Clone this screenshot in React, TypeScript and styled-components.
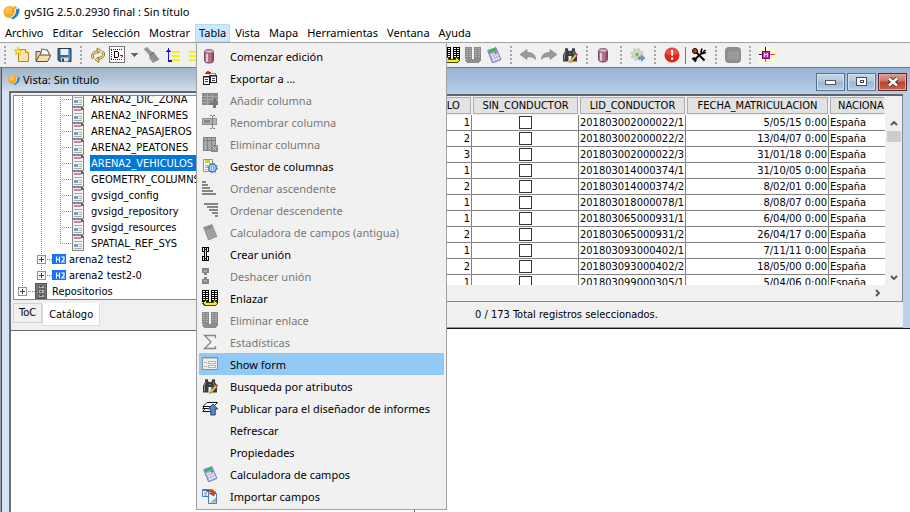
import React from "react";
import styled, { createGlobalStyle } from "styled-components";

const UI = `"Noto Sans", "Open Sans", sans-serif`;
const SWING = `"DejaVu Sans Condensed", "DejaVu Sans", sans-serif`;

const GlobalStyle = createGlobalStyle`
  * { box-sizing: border-box; }
  html, body { margin: 0; background: #fff; overflow: hidden; }
  body { font: 11px/16px ${UI}; color: #000; }
  button { font: inherit; color: inherit; background: none; border: 0; padding: 0; margin: 0; }
  svg { display: block; }
`;

const Page = styled.div`
  display: flex;
  flex-direction: column;
  min-height: 100vh;
`;

const TitleBar = styled.header`
  display: flex;
  align-items: center;
  gap: 4px;
  height: 24px;
  padding-left: 3px;
`;

const AppTitle = styled.h1`
  margin: 0;
  font: 11px/16px ${UI};
`;

const MenuBar = styled.nav`
  position: relative;
  display: flex;
  gap: 1px;
  height: 19px;
  padding-left: 1px;
  border-bottom: 1px solid #a0a0a0;
`;

const MenuButton = styled.button<{ $open?: boolean }>`
  height: 18px;
  padding: 0 4px;
  line-height: 18px;
  background: ${(p) => (p.$open ? "#cce8ff" : "transparent")};
  box-shadow: ${(p) => (p.$open ? "inset 0 0 0 1px #b4dcfa" : "none")};
`;

const Dropdown = styled.ul`
  position: absolute;
  z-index: 10;
  left: 196px;
  top: 18px;
  width: 251px;
  margin: 0;
  padding: 2px;
  list-style: none;
  background: #f1f1f1;
  border: 1px solid #a0a0a0;
`;

const DropItem = styled.button<{ $active?: boolean }>`
  display: flex;
  align-items: center;
  gap: 12px;
  width: 100%;
  height: 22px;
  padding-left: 3px;
  text-align: left;
  line-height: 18px;
  background: ${(p) => (p.$active ? "#91c9f7" : "transparent")};
  &:disabled { color: #777; }
`;

const DropLabel = styled.span`
  padding-top: 2px;
`;

const IconBox = styled.span`
  width: 16px;
  height: 16px;
  flex: none;
`;

const Toolbar = styled.div`
  display: flex;
  align-items: center;
  gap: 7px;
  height: 25px;
  padding-left: 3px;
  background: #f0f0f0;
  border-bottom: 1px solid #77777d;
`;

const Grip = styled.span`
  flex: none;
  width: 4px;
  height: 20px;
  background: radial-gradient(circle at 2px 2px, #a8a8a8 1px, transparent 1px) 0 0 / 4px 4px;
`;

const ToolGroup = styled.div<{ $gapBefore?: number }>`
  display: flex;
  align-items: center;
  gap: 5px;
  margin-left: ${(p) => p.$gapBefore ?? 0}px;
`;

const ToolButton = styled.button<{ $wide?: boolean }>`
  flex: none;
  width: ${(p) => (p.$wide ? 30 : 16)}px;
  margin-left: ${(p) => (p.$wide ? -2 : 0)}px;
`;

const ToolRule = styled.span`
  width: 1px;
  height: 17px;
  background: #777;
`;

const Desktop = styled.main`
  display: flex;
  flex: 1;
  align-items: stretch;
`;

const ViewWindow = styled.section`
  display: flex;
  flex-direction: column;
  flex: none;
  width: 415px;
  border-left: 1px solid #9aa3ad;
  border-right: 1px solid #555;
`;

const ViewTitle = styled.div`
  display: flex;
  align-items: center;
  gap: 3px;
  height: 23px;
  padding-left: 6px;
  border-left: 1px solid #4c5158;
  background: linear-gradient(#9fb4ca, #b4c6d8 50%, #d2dfec);
`;

const WindowCaption = styled.h2`
  margin: 0;
  font: 11px/16px ${UI};
`;

const ViewBody = styled.div`
  display: flex;
  flex: 1;
  flex-direction: column;
  padding-left: 7px;
  background: #d6e4f2;
  border-left: 1px solid #4c5158;
`;

const ViewSplit = styled.div`
  display: flex;
  flex: 1;
  flex-direction: column;
  background: #f0f0f0;
  border-top: 2px solid #63666b;
  border-left: 2px solid #696c70;
`;

const Tree = styled.ul`
  display: flex;
  flex-direction: column;
  justify-content: flex-end;
  height: 205px;
  margin: 2px 2px 0;
  padding: 0 0 0 8px;
  overflow: hidden;
  list-style: none;
  background: #fff;
  border: 1px solid #828790;
  font: 11px/18px ${SWING};
`;

const TreeRow = styled.li`
  display: flex;
  flex: none;
  align-items: center;
  height: 16px;
  white-space: nowrap;
`;

type Line = "full" | "half" | "none";
const Guide = styled.span<{ $v: Line; $h?: boolean; $w: number }>`
  display: flex;
  flex: none;
  align-items: center;
  width: ${(p) => p.$w}px;
  height: 16px;
  background-image: repeating-linear-gradient(#888 0 1px, transparent 1px 2px),
    repeating-linear-gradient(90deg, #888 0 1px, transparent 1px 2px);
  background-repeat: no-repeat;
  background-size: 1px ${(p) => ({ full: 16, half: 8, none: 0 })[p.$v]}px, ${(p) => (p.$h ? "100%" : "0")} 1px;
  background-position: 0 0, 0 8px;
`;

const Expander = styled.button`
  flex: none;
  width: 9px;
  height: 9px;
  margin-left: -4px;
`;

const TreeIcon = styled.span<{ $w: number }>`
  flex: none;
  width: ${(p) => p.$w}px;
`;

const TreeLabel = styled.span<{ $selected?: boolean }>`
  flex: 1;
  padding-left: 1px;
  height: 16px;
  color: ${(p) => (p.$selected ? "#fff" : "#000")};
  background: ${(p) => (p.$selected ? "#0078d7" : "transparent")};
`;

const Tabs = styled.div`
  display: flex;
  align-items: flex-start;
  height: 31px;
  padding: 3px 0 0 2px;
  border-bottom: 1px solid #696969;
`;

const Tab = styled.button<{ $active?: boolean }>`
  height: ${(p) => (p.$active ? 23 : 20)}px;
  padding: 0 ${(p) => (p.$active ? 6 : 5)}px;
  font: 11px/16px ${SWING};
  background: ${(p) => (p.$active ? "#fff" : "#f0f0f0")};
  border: 1px solid ${(p) => (p.$active ? "#dcdcdc" : "#d2d2d2")};
  border-top-color: ${(p) => (p.$active ? "#fff" : "#d2d2d2")};
`;

const MapCanvas = styled.div`
  flex: 1;
  background: #fff;
`;

const TableWindow = styled.section`
  z-index: 1;
  flex: 1;
  align-self: flex-start;
  min-width: 0;
  margin-left: -47px;
  background: #b9d1ea;
  border-bottom: 1px solid #101418;
`;

const TableTitle = styled.div`
  display: flex;
  align-items: center;
  justify-content: flex-end;
  gap: 2px;
  height: 26px;
  padding: 1px 3px 0 0;
  background: linear-gradient(#98b4d3, #a9c4e1 60%, #b9d1ea);
`;

const WinButton = styled.button<{ $close?: boolean }>`
  display: flex;
  align-items: center;
  justify-content: center;
  width: 29px;
  height: 18px;
  border: 1px solid ${(p) => (p.$close ? "#5c2a2a" : "#5b6f86")};
  box-shadow: inset 0 0 0 1px ${(p) => (p.$close ? "#dca79d" : "#d3e2f1")};
  background: ${(p) =>
    p.$close
      ? "linear-gradient(#dd9a8c, #cf7463 45%, #b8432e 50%, #c9644c)"
      : "linear-gradient(#c3d5e8, #b3c9e0 45%, #9bb6d2 50%, #b5cce4)"};
`;

const TableBody = styled.div`
  margin: 0 7px 0 8px;
  background: #f0f0f0;
  border-top: 2px solid #62646b;
`;

const ScrollPane = styled.div`
  display: grid;
  grid-template-columns: minmax(0, 1fr) 17px;
  border-right: 1px solid #828790;
  border-bottom: 1px solid #828790;
`;

const GridView = styled.div`
  height: 189px;
  overflow: hidden;
  background: #fff;
`;

const DataTable = styled.table`
  width: 100%;
  table-layout: fixed;
  border-collapse: separate;
  border-spacing: 0;
  font: 11px/15px ${SWING};
`;

const HeadCell = styled.th<{ $w?: number }>`
  width: ${(p) => (p.$w ? p.$w + "px" : "auto")};
  height: 19px;
  padding: 1px 0 1px 1px;
  font-weight: 400;
  background: #f0f0f0;
  &:last-child span { padding-left: 7px; text-align: left; border-right: 0; }
`;

const HeadLabel = styled.span`
  display: block;
  height: 17px;
  margin-right: 1px;
  overflow: hidden;
  white-space: nowrap;
  background: #e2e2e2;
  border: 1px solid #adadad;
`;

const Cell = styled.td<{ $align?: string }>`
  height: 16px;
  padding: 0 1px;
  overflow: hidden;
  white-space: nowrap;
  text-align: ${(p) => p.$align ?? "left"};
  border-right: 1px solid #828282;
  border-bottom: 1px solid #828282;
  &:last-child { border-right: 0; }
`;

const Check = styled.input`
  display: block;
  appearance: none;
  width: 13px;
  height: 13px;
  margin: 1px auto;
  background: #fff;
  border: 1px solid #333;
`;

const VScroll = styled.div`
  display: flex;
  flex-direction: column;
  align-items: center;
  gap: 4px;
  padding: 24px 0 4px;
`;

const Thumb = styled.span`
  width: 14px;
  height: 11px;
  margin-bottom: auto;
  background: #cdcdcd;
`;

const HScroll = styled.div`
  display: flex;
  align-items: center;
  justify-content: flex-end;
  height: 16px;
  padding-right: 3px;
`;

const Status = styled.p`
  margin: 0;
  height: 26px;
  padding-left: 99px;
  font: 11px/26px ${SWING};
  border-bottom: 1px solid #3fb4d4;
`;

/* ---------- icons ---------- */

const Svg = ({ w = 16, h = 16, crisp, children }: { w?: number; h?: number; crisp?: boolean; children: React.ReactNode }) => (
  <svg width={w} height={h} viewBox={`0 0 ${w} ${h}`} fill="none" shapeRendering={crisp ? "crispEdges" : "auto"} aria-hidden="true">
    {children}
  </svg>
);

const Logo = ({ s = 17 }: { s?: number }) => (
  <svg width={s} height={s} viewBox="0 0 17 17" aria-hidden="true">
    <circle cx="6.500" cy="8" r="6" fill="#f4a71c" />
    <circle cx="5.500" cy="6.500" r="3.500" fill="#fbc34e" />
    <path d="M11 1.500l3 2-1.500 2.200-2-1.800z" fill="#f4a71c" />
    <path d="M12.500 5.500l3.800-1.200c.7 5-1.800 9.700-7 11.200l-1.300-2c3.200-1.200 5-4.200 4.500-8z" fill="#1e86c8" />
    <path d="M8.500 13.200c3-1.500 4.300-4.400 3.800-8.200" stroke="#fff" fill="none" />
  </svg>
);

const Cylinder = () => (
  <Svg>
    <path d="M2.500 4v8.500c0 1.500 1.500 2.500 4.500 2.500s4.500-1 4.500-2.500V4z" fill="#b87088" stroke="#6b4a62" />
    <path d="M4 5v8.500l2 .8V5.500z" fill="#ecc8d4" />
    <path d="M9.500 5v9l1.500-.8V5z" fill="#8d5069" />
    <ellipse cx="7" cy="3.500" rx="4.500" ry="2" fill="#d5adbf" stroke="#80607f" />
  </Svg>
);

const ExportIcon = () => (
  <Svg crisp>
    <path d="M7.500 3.500h6v3h-6z" fill="#fff" stroke="#8a8ab0" />
    <path d="M1.500 6.500h6v8h-6zM8.500 5.500h6v7h-6z" fill="#fff" stroke="#222" />
    <path d="M3 9.500h3M3 11.500h3M10 8.500h3M10 10.500h3" stroke="#333" />
    <path d="M2 7.500h5M9 6.500h5" stroke="#8080c8" />
    <path d="M3 4h5V3h1V2H7V1H5v1H4v1H3z" fill="#e01010" />
  </Svg>
);

const G = "#969696";
const AddCol = () => (
  <Svg crisp>
    <path d="M0 1h16v12H0z" fill="#8a8a8a" />
    <path d="M0 4.500h16M0 7.500h16M0 10.500h16M5.500 2v11M10.500 2v11" stroke="#a8a8a8" />
    <path d="M8 10h3V7h3v3h2v3h-2v3h-3v-3H8z" fill="#777" />
  </Svg>
);
const RenameCol = () => (
  <Svg crisp>
    <path d="M0.500 4.500h14v6h-14z" fill="#b4b4b4" stroke="#909090" />
    <path d="M2 6h6v3H2z" fill="#8a8a8a" />
    <path d="M8 1.500h2M11 1.500h2M10.500 2v12M8 14.500h2M11 14.500h2" stroke="#7d7d7d" />
  </Svg>
);
const DelCol = () => (
  <Svg crisp>
    <path d="M1.500 1.500h12v13h-12z" fill="#a9a9a9" stroke="#808080" />
    <path d="M5.500 2v12M9.500 2v12M2 4.500h11" stroke="#808080" />
    <path d="M9 9h7v7H9z" fill="#8a8a8a" />
    <path d="M10.500 10.500l4 4M14.500 10.500l-4 4" stroke="#c8c8c8" />
  </Svg>
);
const ManageCols = () => (
  <Svg>
    <path d="M1.500 1.500h9v12h-9z" fill="#fff" stroke="#8d9488" />
    <path d="M3 2h5v3H3z" fill="#b6dc2c" />
    <path d="M3 7.500h3M3 9.500h2M3 11.500h2" stroke="#8aa" />
    <circle cx="10.500" cy="10" r="3.800" fill="#dcebf7" stroke="#3d7bb0" strokeWidth="1.500" />
    <circle cx="10.500" cy="10" r="4.900" stroke="#3d7bb0" strokeDasharray="1.600 2.250" />
    <circle cx="10.500" cy="10" r="1.500" fill="#fff" stroke="#3d7bb0" />
  </Svg>
);
const SortAsc = () => (
  <Svg crisp>
    <path d="M0 2h4M0 5h6M0 8h8M0 11h11M0 14h14" stroke="#858585" strokeWidth="2" />
  </Svg>
);
const SortDesc = () => (
  <Svg crisp>
    <path d="M2 2h14M5 5h11M7 8h9M10 11h6M13 14h3" stroke="#858585" strokeWidth="2" />
  </Svg>
);
const Calc = ({ gray }: { gray?: boolean }) => (
  <Svg>
    <path d="M1.500 3.500l8.500-3L15 12.500 6.500 16z" fill={gray ? "#9c9c9c" : "#a3a7e0"} stroke={gray ? "#8a8a8a" : "#6a6fa8"} strokeWidth=".7" />
    <path d="M2.500 3.800l7-2.500 1 2.200-7.200 2.800z" fill={gray ? "#8a8a8a" : "#27c13a"} />
    <path d="M4.500 7.500l6.500-2.500 2.800 6.800-6.300 2.800z" fill={gray ? "#a8a8a8" : "#eceefb"} />
    <path d="M5 9.500l7-2.700M6 12l7-2.700M6.800 6.800l3 7M9 6l3 7" stroke={gray ? "#959595" : "#9a9edb"} strokeWidth=".7" />
    {!gray && <path d="M8.500 5.200l2-.8.6 1.500-2 .8z" fill="#e33" />}
  </Svg>
);
const JoinIcon = () => (
  <Svg crisp>
    <path d="M0 1h7v5H5v4h2v5H0v-5h2V6H0z" fill="#000" />
    <path d="M1 2h1v3H1zM5 2h1v3H5zM1 11h1v3H1zM5 11h1v3H5zM3 4h1v8H3zM3 2h1v1H3zM3 13h1v1H3z" fill="#e4e4e4" />
  </Svg>
);
const UnjoinIcon = () => (
  <Svg crisp>
    <path d="M0 0h7v5H5v2H2V5H0zM2 9h3v2h2v5H0v-5h2z" fill="#858585" />
    <path d="M2 2h3v2H2zM2 12h3v2H2z" fill="#a8a8a8" />
  </Svg>
);
const LinkIcon = ({ gray }: { gray?: boolean }) => (
  <Svg crisp>
    <path d="M0 0h7v12H0zM9 0h7v12H9z" fill={gray ? "#8a8a8a" : "#000"} />
    <path d="M1 1.500h5M1 3.500h5M1 5.500h5M1 7.500h5M1 9.500h5M10 1.500h5M10 3.500h5M10 5.500h5M10 7.500h5M10 9.500h5" stroke={gray ? "#b0b0b0" : "#fff"} strokeDasharray="2 1" />
    <path d="M0 13l3-3h2v2h6v-2h2l3 3-2 3H2z" fill={gray ? "#8a8a8a" : "#4a4600"} />
    <path d="M1 13l3-2v2h8v-2l3 2-2 2H3z" fill={gray ? "#8f8f8f" : "#f5ee1e"} />
  </Svg>
);
const Sigma = () => (
  <Svg>
    <path d="M13.500 4V1.500H2.500L9 8l-6.500 6.500h11V12" stroke="#858585" strokeWidth="1.300" />
  </Svg>
);
const FormIcon = () => (
  <Svg crisp>
    <path d="M0.500 1.500h15v12h-15z" fill="#eeeeec" stroke="#8d8f8e" />
    <path d="M1 2.500h14" stroke="#c4c6c4" />
    <path d="M2 6.500h3M2 10.500h3" stroke="#b0b2b0" />
    <path d="M6.500 5.500h7v2h-7zM6.500 9.500h7v2h-7z" fill="#fff" stroke="#b4b6b4" />
  </Svg>
);
const Binoculars = () => (
  <Svg>
    <path d="M3 1h3v2l1 1h2l1-1V1h3v3l2 4v6.500H9.500V9h-3v5.500H1V8l2-4z" fill="#3a3c3e" />
    <path d="M3.500 4L2.500 8v5M11.500 4l1 4" stroke="#85888c" />
    <path d="M3 1.500h3M10 1.500h3M7 6.500h2" stroke="#6f7275" />
    <path d="M7.500 15.500l1-2.500 5-6 1.500 1.500-5 6z" fill="#f3d64b" stroke="#6d5a14" strokeWidth=".6" />
    <path d="M13.200 7.300L14.500 6l1.500 1.500-1.200 1.200z" fill="#e0322e" />
  </Svg>
);
const Publish = () => (
  <Svg>
    <path d="M3 8.500L.8 11.500H9M3 5.500L.8 8.500H9" stroke="#111" fill="#fff" />
    <path d="M5 2.500h10.500L11.500 6.500H1z" fill="#fff" stroke="#111" />
    <path d="M11 4l4.800 5h-2.600v6H8.800V9H6.200z" fill="#5f86c0" stroke="#27467c" />
  </Svg>
);
const ImportIcon = () => (
  <Svg>
    <path d="M.5 1.500h6v7h-6z" fill="#fff" stroke="#4d7cb3" />
    <path d="M1 2.500h6M2 5h3M2 7h3" stroke="#4d7cb3" />
    <path d="M6.500 5.500h8v10h-8z" fill="#eef4fa" stroke="#4d7cb3" />
    <path d="M8 14.500l6-5v5z" fill="#8dbfa4" />
    <path d="M4.500 4C6 .5 11.500.5 12.500 4l1.200-.2-2 4.200L8 5.500l1.800-.4C9 3.500 6.500 3.200 4.500 4z" fill="#c4541f" stroke="#7c2d0c" strokeWidth=".6" />
  </Svg>
);

const NewIcon = () => (
  <Svg>
    <path d="M4.500 2.500h7l3 3v9h-10z" fill="#f9e3a8" stroke="#b08428" />
    <path d="M11.500 2.500v3h3" stroke="#b08428" fill="#fff6d8" />
    <path d="M4 0l1 2.800L8 3 5.700 5l.8 3L4 6.200 1.500 8l.8-3L0 3l3-.2z" fill="#ffe436" stroke="#d0a410" strokeWidth=".5" />
  </Svg>
);
const OpenIcon = () => (
  <Svg>
    <path d="M1 14V4.500h4l1.500 1.500H12v3" fill="#e7cf98" stroke="#5a5140" />
    <path d="M6 2.500h5.500L14 5v5H6z" fill="#fff" stroke="#555" transform="rotate(14 9 6)" />
    <path d="M1 14.500L4.500 8H16l-3.500 6.500z" fill="#f3ddab" stroke="#5a5140" />
  </Svg>
);
const SaveIcon = () => (
  <Svg>
    <path d="M2 1.500h13v13H3.500L2 13z" fill="#3d6a8a" stroke="#243f55" />
    <path d="M4.500 2h8v6h-8z" fill="#eaf1f6" />
    <path d="M5 10.500h7.500v4H5z" fill="#dde2e5" />
    <path d="M6 11.500h2v3H6z" fill="#243f55" />
    <path d="M13 3v10" stroke="#7fb0d0" />
  </Svg>
);
const RefreshIcon = () => (
  <Svg>
    <path d="M8.500 4L5 5.500C2 7 1.800 9.500 3.500 11.500" stroke="#7a5a14" strokeWidth="2.800" />
    <path d="M8.500 4L5 5.500C2 7 1.800 9.500 3.500 11.500" stroke="#f5dc92" strokeWidth="1.400" />
    <path d="M7.500 12.500l3.500-1.700c3-1.500 3.200-4 1.500-6.300" stroke="#7a5a14" strokeWidth="2.800" />
    <path d="M7.500 12.500l3.500-1.700c3-1.500 3.200-4 1.500-6.300" stroke="#f5dc92" strokeWidth="1.400" />
    <path d="M7 1l4 2.300-2.800 3.200zM9 15.500l-4-2.600 3-3z" fill="#f5dc92" stroke="#7a5a14" strokeWidth=".7" />
  </Svg>
);
const DropTool = () => (
  <Svg w={30} h={18} crisp>
    <path d="M.5.500h15v16H.5z" fill="#fff" stroke="#777" />
    <path d="M2 3.500h12M2 13.500h12" stroke="#222" strokeDasharray="1 1" />
    <path d="M2.500 4v10" stroke="#222" strokeDasharray="1 1" />
    <path d="M5.500 5v7M5 5.500h4M5 11.500h4M9.500 6v5" stroke="#111" />
    <path d="M11 9.500h2M13.500 9v2M12.500 11v1M12.500 13v1" stroke="#d01030" />
    <path d="M21 7h8l-4 4z" fill="#666" />
  </Svg>
);
const Brush = () => (
  <Svg>
    <path d="M1 1l2-1 5 5 2 .5 5.500 7L9 16l-4-5 .5-3L0 2.500z" fill={G} />
    <path d="M5.500 8.500L10 5.500" stroke="#707070" strokeWidth="1.500" />
    <path d="M8 9l5 5M10 8l4.500 5" stroke="#868686" />
  </Svg>
);
const SelectUp = () => (
  <Svg crisp>
    <path d="M1 4h1V3h1V1h1v2h1v1h1v1H4v8h3v2H3V5H1z" fill="#1414e6" />
    <path d="M7 5h8M7 9h8M7 13h8" stroke="#f7f100" strokeWidth="2" />
  </Svg>
);
const SelectRows = () => (
  <Svg crisp>
    <path d="M3 5h12M3 9h12M3 13h12" stroke="#f7f100" strokeWidth="2" />
  </Svg>
);
const Undo = ({ flip }: { flip?: boolean }) => (
  <Svg>
    <g transform={flip ? "translate(16 0) scale(-1 1)" : undefined}>
      <path d="M0 7.500l7-5v3c5-.3 8.500 2 8.500 7-2-2.500-4.500-3-8.500-2.600v2.600z" fill="#999" stroke="#858585" strokeWidth=".6" />
    </g>
  </Svg>
);
const Gear = () => (
  <Svg>
    <circle cx="7" cy="7.500" r="4" fill="#e6e6e3" stroke="#cfcfcb" strokeWidth="2.500" />
    <circle cx="7" cy="7.500" r="5.800" stroke="#c6c6c2" strokeWidth="1.500" strokeDasharray="2.400 2.150" />
    <circle cx="7" cy="7.500" r="2" fill="#7cc226" />
    <path d="M8 9.500h3v-2.500l4.500 4-4.500 4v-2.500H8z" fill="#6d93c0" />
  </Svg>
);
const ErrorIcon = () => (
  <Svg>
    <circle cx="8" cy="8" r="7.500" fill="#e0251b" />
    <path d="M1.500 7a6.500 6 0 0 1 13 0c-4 1.500-9 1.500-13 0z" fill="#ec4f46" />
    <path d="M7 3h2.200l-.4 6H7.400zM7 10.500h2.200v2.200H7z" fill="#fff" />
  </Svg>
);
const Tools = () => (
  <Svg>
    <path d="M2.500 13.500L11.500 5.500M5 5l8.500 8.500" stroke="#000" strokeWidth="2" />
    <path d="M14.500 3l-2.300 2M11 1.500L10 5l1.500 1.500L15 5.500M1 12l2-1 2 2-1 2" stroke="#000" strokeWidth="1.600" />
    <circle cx="4" cy="4" r="2.500" fill="#c23b2c" stroke="#000" />
  </Svg>
);
const InfoGray = () => (
  <Svg>
    <rect x="0" y="0" width="16" height="16" rx="4" fill="#8e8e8e" />
    <path d="M4 5h2v7H4zM9 11l4-6M8 5h5v7H8z" fill="#969696" stroke="#a6a6a6" strokeWidth=".8" />
  </Svg>
);
const Snap = () => (
  <Svg crisp>
    <path d="M0 0h16v16H0z" fill="#fdfbd8" />
    <path d="M6.500 0v15M0 7.500h6" stroke="#111" />
    <path d="M10 7.500h6M6.500 12v3" stroke="#e0502c" />
    <path d="M3 4h7v7H3z" fill="#d41cc8" stroke="#7a0a74" />
    <path d="M5.500 6v4M8.500 6v4M6 7.500h2" stroke="#fbd8f8" />
  </Svg>
);

const DocIcon = () => (
  <Svg w={13} h={16} crisp>
    <path d="M.5.500h8l3 3v12H.5z" fill="#f4f4f2" stroke="#858585" />
    <path d="M9 0v3h3V2l-2-2z" fill="#666" />
    <path d="M2 3h7" stroke="#cf8099" strokeWidth="2" />
    <path d="M2 6.500h8M7 9.500h3M7 11.500h3M2 13.500h8" stroke="#aaa" />
    <path d="M2 9h4v3H2z" fill="#6da2c8" />
  </Svg>
);
const DbIcon = () => (
  <Svg w={14} h={10}>
    <path d="M0 0h14v10H0z" fill="#1670fb" />
    <path d="M4.500 2.500v6M7.500 2.500v6M4.500 5.500h3M9.500 3.200h2.500v2.300L9.800 8H13" stroke="#fff" strokeWidth="1.200" />
  </Svg>
);
const RepoIcon = () => (
  <Svg w={12} h={16} crisp>
    <path d="M.5.500h11v15H.5z" fill="#777" stroke="#555" />
    <path d="M3 2h6v3H3zM3 6h6v4H3zM3 11h6v3H3z" fill="#b0b0b0" stroke="#666" />
    <path d="M5 3.500h2M5 8h2M5 12.500h2" stroke="#444" />
  </Svg>
);
const PlusBox = () => (
  <Svg w={9} h={9} crisp>
    <path d="M.5.500h8v8h-8z" fill="#fff" stroke="#919191" />
    <path d="M2 4.500h5M4.500 2v5" stroke="#25407a" />
  </Svg>
);

/* ---------- data ---------- */

const menus = ["Archivo", "Editar", "Selección", "Mostrar", "Tabla", "Vista", "Mapa", "Herramientas", "Ventana", "Ayuda"];

type Item = { label: string; icon?: React.ReactNode; off?: boolean; active?: boolean };
const items: Item[] = [
  { label: "Comenzar edición", icon: <Cylinder /> },
  { label: "Exportar a ...", icon: <ExportIcon /> },
  { label: "Añadir columna", icon: <AddCol />, off: true },
  { label: "Renombrar columna", icon: <RenameCol />, off: true },
  { label: "Eliminar columna", icon: <DelCol />, off: true },
  { label: "Gestor de columnas", icon: <ManageCols /> },
  { label: "Ordenar ascendente", icon: <SortAsc />, off: true },
  { label: "Ordenar descendente", icon: <SortDesc />, off: true },
  { label: "Calculadora de campos (antigua)", icon: <Calc gray />, off: true },
  { label: "Crear unión", icon: <JoinIcon /> },
  { label: "Deshacer unión", icon: <UnjoinIcon />, off: true },
  { label: "Enlazar", icon: <LinkIcon /> },
  { label: "Eliminar enlace", icon: <LinkIcon gray />, off: true },
  { label: "Estadísticas", icon: <Sigma />, off: true },
  { label: "Show form", icon: <FormIcon />, active: true },
  { label: "Busqueda por atributos", icon: <Binoculars /> },
  { label: "Publicar para el diseñador de informes", icon: <Publish /> },
  { label: "Refrescar" },
  { label: "Propiedades" },
  { label: "Calculadora de campos", icon: <Calc /> },
  { label: "Importar campos", icon: <ImportIcon /> },
];

const tables = [
  "ARENA2_DIC_ZONA", "ARENA2_INFORMES", "ARENA2_PASAJEROS", "ARENA2_PEATONES", "ARENA2_VEHICULOS",
  "GEOMETRY_COLUMNS", "gvsigd_config", "gvsigd_repository", "gvsigd_resources", "SPATIAL_REF_SYS",
];

const records: [number, string, string][] = [
  [1, "201803002000022/1", "5/05/15 0:00"],
  [2, "201803002000022/2", "13/04/07 0:00"],
  [3, "201803002000022/3", "31/01/18 0:00"],
  [1, "201803014000374/1", "31/10/05 0:00"],
  [2, "201803014000374/2", "8/02/01 0:00"],
  [1, "201803018000078/1", "8/08/07 0:00"],
  [1, "201803065000931/1", "6/04/00 0:00"],
  [2, "201803065000931/2", "26/04/17 0:00"],
  [1, "201803093000402/1", "7/11/11 0:00"],
  [2, "201803093000402/2", "18/05/00 0:00"],
  [1, "201803099000305/1", "5/04/06 0:00"],
];

const Tool = ({ name, wide, children }: { name: string; wide?: boolean; children: React.ReactNode }) => (
  <ToolButton type="button" aria-label={name} $wide={wide}>{children}</ToolButton>
);

export default function App() {
  return (
    <Page>
      <GlobalStyle />
      <TitleBar>
        <Logo />
        <AppTitle>gvSIG 2.5.0.2930 final : Sin título</AppTitle>
      </TitleBar>
      <MenuBar>
        {menus.map((m) => (
          <MenuButton key={m} type="button" $open={m === "Tabla"}>{m}</MenuButton>
        ))}
        <Dropdown>
          {items.map((it) => (
            <li key={it.label}>
              <DropItem type="button" disabled={it.off} $active={it.active}>
                <IconBox>{it.icon}</IconBox>
                <DropLabel>{it.label}</DropLabel>
              </DropItem>
            </li>
          ))}
        </Dropdown>
      </MenuBar>
      <Toolbar>
        <Grip />
        <ToolGroup>
          <Tool name="Nuevo"><NewIcon /></Tool>
          <Tool name="Abrir"><OpenIcon /></Tool>
          <Tool name="Guardar"><SaveIcon /></Tool>
        </ToolGroup>
        <Grip />
        <ToolGroup>
          <Tool name="Recargar"><RefreshIcon /></Tool>
          <Tool name="Selección" wide><DropTool /></Tool>
          <Tool name="Limpiar selección"><Brush /></Tool>
          <Tool name="Mover arriba"><SelectUp /></Tool>
          <Tool name="Filas"><SelectRows /></Tool>
        </ToolGroup>
        <ToolGroup $gapBefore={235}>
          <Tool name="Enlazar"><LinkIcon /></Tool>
          <Tool name="Eliminar enlace"><LinkIcon gray /></Tool>
          <Tool name="Calculadora de campos"><Calc /></Tool>
        </ToolGroup>
        <Grip />
        <ToolGroup>
          <Tool name="Deshacer"><Undo /></Tool>
          <Tool name="Rehacer"><Undo flip /></Tool>
          <Tool name="Busqueda por atributos"><Binoculars /></Tool>
        </ToolGroup>
        <Grip />
        <ToolGroup><Tool name="Comenzar edición"><Cylinder /></Tool></ToolGroup>
        <Grip />
        <ToolGroup><Tool name="Geoprocesos"><Gear /></Tool></ToolGroup>
        <Grip />
        <ToolGroup>
          <Tool name="Errores"><ErrorIcon /></Tool>
          <ToolRule />
          <Tool name="Preferencias"><Tools /></Tool>
        </ToolGroup>
        <Grip />
        <ToolGroup><Tool name="Información"><InfoGray /></Tool></ToolGroup>
        <Grip />
        <ToolGroup><Tool name="Hiperenlace"><Snap /></Tool></ToolGroup>
      </Toolbar>
      <Desktop>
        <ViewWindow>
          <ViewTitle>
            <Logo s={12} />
            <WindowCaption>Vista: Sin título</WindowCaption>
          </ViewTitle>
          <ViewBody>
            <ViewSplit>
              <Tree>
                {tables.map((t, i) => (
                  <TreeRow key={t}>
                    <Guide $v="full" $w={19} />
                    <Guide $v="full" $w={19} />
                    <Guide $v={i === tables.length - 1 ? "half" : "full"} $h $w={12} />
                    <TreeIcon $w={18}><DocIcon /></TreeIcon>
                    <TreeLabel $selected={t === "ARENA2_VEHICULOS"}>{t}</TreeLabel>
                  </TreeRow>
                ))}
                {["arena2 test2", "arena2 test2-0"].map((t, i) => (
                  <TreeRow key={t}>
                    <Guide $v="full" $w={19} />
                    <Guide $v={i ? "half" : "full"} $h $w={11}>
                      <Expander type="button" aria-label={"Expandir " + t}><PlusBox /></Expander>
                    </Guide>
                    <TreeIcon $w={16}><DbIcon /></TreeIcon>
                    <TreeLabel>{t}</TreeLabel>
                  </TreeRow>
                ))}
                <TreeRow>
                  <Guide $v="half" $h $w={13}>
                    <Expander type="button" aria-label="Expandir Repositorios"><PlusBox /></Expander>
                  </Guide>
                  <TreeIcon $w={16}><RepoIcon /></TreeIcon>
                  <TreeLabel>Repositorios</TreeLabel>
                </TreeRow>
              </Tree>
              <Tabs>
                <Tab type="button">ToC</Tab>
                <Tab type="button" $active>Catálogo</Tab>
              </Tabs>
              <MapCanvas />
            </ViewSplit>
          </ViewBody>
        </ViewWindow>
        <TableWindow>
          <TableTitle>
            <WinButton type="button" aria-label="Minimizar">
              <Svg w={11} h={6} crisp><path d="M.5 1.500h10v4H.5z" fill="#fff" stroke="#555" /></Svg>
            </WinButton>
            <WinButton type="button" aria-label="Maximizar">
              <Svg w={11} h={9} crisp><path d="M.5.500h10v8H.5zM4 3.500h3v2H4z" fill="#fff" stroke="#444b55" /></Svg>
            </WinButton>
            <WinButton type="button" aria-label="Cerrar" $close>
              <Svg w={12} h={10}>
                <path d="M2 1.500l8 7M10 1.500l-8 7" stroke="#4d3035" strokeWidth="4.500" />
                <path d="M2 1.500l8 7M10 1.500l-8 7" stroke="#fff" strokeWidth="2.500" />
              </Svg>
            </WinButton>
          </TableTitle>
          <TableBody>
            <ScrollPane>
              <GridView>
                <DataTable>
                  <thead>
                    <tr>
                      <HeadCell $w={96}><HeadLabel>LID_VEHICULO</HeadLabel></HeadCell>
                      <HeadCell $w={107}><HeadLabel>SIN_CONDUCTOR</HeadLabel></HeadCell>
                      <HeadCell $w={107}><HeadLabel>LID_CONDUCTOR</HeadLabel></HeadCell>
                      <HeadCell $w={143}><HeadLabel>FECHA_MATRICULACION</HeadLabel></HeadCell>
                      <HeadCell><HeadLabel>NACIONALIDAD</HeadLabel></HeadCell>
                    </tr>
                  </thead>
                  <tbody>
                    {records.map(([n, id, date]) => (
                      <tr key={id}>
                        <Cell $align="right">{n}</Cell>
                        <Cell><Check type="checkbox" aria-label={"Sin conductor " + id} /></Cell>
                        <Cell>{id}</Cell>
                        <Cell $align="right">{date}</Cell>
                        <Cell>España</Cell>
                      </tr>
                    ))}
                  </tbody>
                </DataTable>
              </GridView>
              <VScroll>
                <Svg w={8} h={7}><path d="M1 5l3-3 3 3" stroke="#555" strokeWidth="1.800" /></Svg>
                <Thumb />
                <Svg w={8} h={7}><path d="M1 2l3 3 3-3" stroke="#555" strokeWidth="1.800" /></Svg>
              </VScroll>
              <HScroll>
                <Svg w={8} h={8}><path d="M2 1l3 3-3 3" stroke="#555" strokeWidth="1.800" /></Svg>
              </HScroll>
            </ScrollPane>
            <Status>0 / 173 Total registros seleccionados.</Status>
          </TableBody>
        </TableWindow>
      </Desktop>
    </Page>
  );
}
